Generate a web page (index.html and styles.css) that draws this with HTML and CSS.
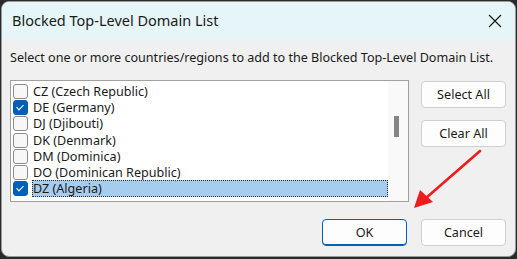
FILE: index.html
```html
<!DOCTYPE html>
<html lang="en">
<head>
    <meta charset="UTF-8">
    <title>Blocked Top-Level Domain List</title>
    <link rel="stylesheet" href="styles.css">
</head>
<body>

<div class="window">
    <div class="titlebar">
        <span class="title">Blocked Top-Level Domain List</span>
        <svg class="close" width="14" height="14" viewBox="0 0 14 14">
            <path d="M1 1 L13 13 M13 1 L1 13" stroke="#1a1a1a" stroke-width="1.2" fill="none"/>
        </svg>
    </div>

    <div class="content">
        <p class="intro">Select one or more countries/regions to add to the Blocked Top-Level Domain List.</p>

        <div class="middle">
            <div class="listbox">
                <ul class="items">
                    <li><span class="check"></span>CZ (Czech Republic)</li>
                    <li><span class="check on"></span>DE (Germany)</li>
                    <li><span class="check"></span>DJ (Djibouti)</li>
                    <li><span class="check"></span>DK (Denmark)</li>
                    <li><span class="check"></span>DM (Dominica)</li>
                    <li><span class="check"></span>DO (Dominican Republic)</li>
                    <li class="selected"><span class="check on"></span><span class="label">DZ (Algeria)</span></li>
                </ul>
                <div class="scrollbar"><div class="thumb"></div></div>
            </div>
            <div class="side">
                <button class="btn">Select All</button>
                <button class="btn">Clear All</button>
            </div>
        </div>

        <div class="footer">
            <button class="btn default">OK</button>
            <button class="btn">Cancel</button>
        </div>
    </div>

    <!-- annotation arrow -->
    <svg class="arrow" width="80" height="70" viewBox="0 0 80 70">
        <line x1="73" y1="5" x2="19" y2="52" stroke="#ee1c1c" stroke-width="2.6" stroke-linecap="round"/>
        <polygon points="7,62 13,44 26,56" fill="#ee1c1c"/>
    </svg>
</div>

</body>
</html>
```

FILE: styles.css
```css
html, body {
    margin: 0;
    padding: 0;
}
body {
    background-color: #2a2a2a;
    font-family: "Noto Sans", "Open Sans", Arial, sans-serif;
    color: #1a1a1a;
    width: 517px;
    height: 259px;
    overflow: hidden;
}
.window {
    position: relative;
    box-sizing: border-box;
    margin: 1px 1px 0 1px;
    width: 515px;
    height: 256px;
    background-color: #f0f0f0;
    border: 1px solid #9a9a9a;
    border-radius: 8px;
    overflow: hidden;
}
.titlebar {
    height: 37px;
    background-color: #e6f6f8;
    display: flex;
    align-items: center;
    justify-content: space-between;
    padding: 0 13px 0 10px;
}
.title {
    font-size: 14.5px;
    margin-top: -1px;
}
.close {
    margin-top: 0;
}
.content {
    padding: 0 9px 0 8px;
}
.intro {
    margin: 9px 0 0 0;
    font-size: 12.6px;
    line-height: 20px;
    letter-spacing: -0.02px;
}
.middle {
    display: flex;
    margin-top: 12px;
    gap: 12px;
}
.listbox {
    box-sizing: border-box;
    width: 400px;
    height: 122px;
    border: 1px solid #a0a0a0;
    background: #fff;
    display: flex;
}
.items {
    list-style: none;
    margin: 0;
    padding: 2px 0 0 2px;
    flex: 1;
}
.items li {
    display: flex;
    align-items: center;
    height: 16.3px;
    font-size: 12.6px;
    white-space: nowrap;
}
.check {
    box-sizing: border-box;
    width: 15px;
    height: 15px;
    border: 1px solid #8a8a8a;
    border-radius: 3px;
    background: #f7f7f7;
    margin-right: 5px;
    flex: none;
    position: relative;
}
.check.on {
    background: #005fb8;
    border-color: #005fb8;
}
.check.on::after {
    content: "";
    position: absolute;
    left: 4px;
    top: 2px;
    width: 3px;
    height: 6px;
    border: solid #fff;
    border-width: 0 1.3px 1.3px 0;
    transform: rotate(45deg);
}
.items li.selected .label {
    box-sizing: border-box;
    flex: 1;
    height: 17px;
    background: #a6cdee;
    outline: 1px dotted #333;
    outline-offset: -1px;
    display: flex;
    align-items: center;
    padding-left: 1px;
    margin-left: -1px;
}
.scrollbar {
    width: 20px;
    background: #f9f9f9;
    position: relative;
}
.thumb {
    position: absolute;
    left: 6px;
    top: 35px;
    width: 5px;
    height: 21px;
    background: #858585;
}
.side {
    display: flex;
    flex-direction: column;
    gap: 12px;
    margin-top: 1px;
}
.btn {
    box-sizing: border-box;
    width: 85px;
    height: 27px;
    background: #fdfdfd;
    border: 1px solid #d0d0d0;
    border-radius: 4px;
    font-family: inherit;
    font-size: 12.6px;
    color: #1a1a1a;
    padding: 0;
}
.btn.default {
    border: 1px solid #005fb8;
    box-shadow: inset 0 -1px 0 #005fb8;
}
.footer {
    display: flex;
    justify-content: flex-end;
    gap: 14px;
    margin-top: 17px;
}
.arrow {
    position: absolute;
    left: 405px;
    top: 144px;
}
```
